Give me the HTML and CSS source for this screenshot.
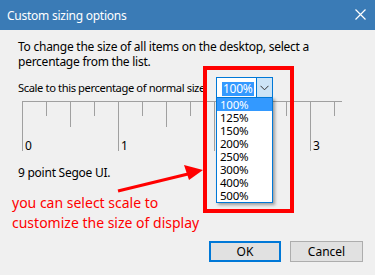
FILE: index.html
```html
<!DOCTYPE html>
<html>
<head>
<meta charset="utf-8">
<link rel="stylesheet" href="styles.css">
</head>
<body>
<div class="window">
  <div class="titlebar">
    <span class="title">Custom sizing options</span>
    <svg class="close" width="11" height="11" viewBox="0 0 11 11"><path d="M0.5 0.5 L10.5 10.5 M10.5 0.5 L0.5 10.5" stroke="#fff" stroke-width="1.2" fill="none"/></svg>
  </div>
  <div class="content">
    <p class="intro">To change the size of all items on the desktop, select a<br>percentage from the list.</p>
    <div class="scale-row">
      <span class="scale-label">Scale to this percentage of normal size</span>
      <div class="combo">
        <div class="combo-field"><span class="sel">100%</span></div>
        <div class="combo-btn"><svg width="9" height="6" viewBox="0 0 9 6"><path d="M0.5 0.8 L4.5 4.8 L8.5 0.8" stroke="#333" stroke-width="1" fill="none"/></svg></div>
      </div>
    </div>
    <svg class="ruler" width="321" height="54" viewBox="0 0 321 54">
      <g stroke="#a0a0a0" stroke-width="1">
        <path d="M0 0.5 H320"/>
        <path d="M0.5 0 V50"/>
        <path d="M24.5 0 V15 M48.5 0 V26 M72.5 0 V15 M96.5 0 V50 M120.5 0 V15 M144.5 0 V26 M168.5 0 V15 M192.5 0 V50 M216.5 0 V15 M240.5 0 V26 M264.5 0 V15 M288.5 0 V50 M312.5 0 V15"/>
      </g>
      <g class="rlabel">
        <text x="3" y="49">0</text>
        <text x="99" y="49">1</text>
        <text x="291" y="49">3</text>
      </g>
    </svg>
    <p class="font-note">9 point Segoe UI.</p>
    <p class="annotation">you can select scale to<br>customize the size of display</p>
    <div class="buttons">
      <button class="btn btn-default">OK</button>
      <button class="btn">Cancel</button>
    </div>
  </div>
  <ul class="dropdown">
    <li class="active">100%</li>
    <li>125%</li>
    <li>150%</li>
    <li>200%</li>
    <li>250%</li>
    <li>300%</li>
    <li>400%</li>
    <li>500%</li>
  </ul>
  <div class="highlight-box"></div>
  <svg class="arrow" width="100" height="40" viewBox="0 0 100 40">
    <path d="M8 31 L78 14" stroke="#ff0000" stroke-width="3" fill="none"/>
    <path d="M93 10 L74 5 L79 20 Z" fill="#ff0000"/>
  </svg>
</div>
</body>
</html>
```

FILE: styles.css
```css
* { box-sizing: border-box; }
html, body { margin: 0; padding: 0; }
body {
  background: #f0f0f0;
  font-family: "Noto Sans", "DejaVu Sans", sans-serif;
  font-size: 12px;
  letter-spacing: -0.25px;
  color: #000;
}
.window {
  position: relative;
  width: 375px;
  height: 275px;
  overflow: hidden;
  background: #f0f0f0;
}
.titlebar {
  height: 30px;
  background: #3a7bb6;
  display: flex;
  align-items: center;
  justify-content: space-between;
  padding: 0 9px 0 7px;
}
.title {
  color: #fff;
  font-size: 12px;
}
.close { display: block; margin-top: -2px; }
.content {
  padding: 9px 12px 0 18px;
}
.intro {
  margin: 0;
  line-height: 15px;
}
.scale-row {
  margin-top: 8px;
  display: grid;
  grid-template-columns: 198px 57px;
  align-items: center;
  height: 21px;
}
.scale-label {
  line-height: 15px;
  white-space: nowrap;
  font-size: 11.2px;
  letter-spacing: -0.4px;
}
.combo {
  display: flex;
  height: 21px;
  border: 1px solid #0078d7;
  background: #fff;
}
.combo-field {
  flex: 1;
  padding: 2px 0 0 5px;
}
.sel {
  display: inline-block;
  background: #3399ff;
  color: #fff;
  line-height: 14px;
  padding: 0 1px;
}
.combo-btn {
  width: 16px;
  background: #cce4f7;
  border-left: 1px solid #0078d7;
  display: flex;
  align-items: center;
  justify-content: center;
}
.ruler {
  display: block;
  margin: 3px 0 0 4px;
}
.rlabel text {
  font-family: "Noto Sans", "DejaVu Sans", sans-serif;
  font-size: 12px;
  fill: #000;
}
.font-note {
  margin: 10px 0 0;
  line-height: 15px;
}
.annotation {
  margin: 13px 0 0 -6px;
  color: #ff0000;
  font-size: 14px;
  line-height: 20px;
  letter-spacing: 0;
}
.buttons {
  display: flex;
  justify-content: flex-end;
  gap: 9px;
  margin-top: 8px;
}
.btn {
  width: 73px;
  height: 21px;
  background: #e1e1e1;
  border: 1px solid #adadad;
  font-family: "Noto Sans", "DejaVu Sans", sans-serif;
  font-size: 12px;
  color: #000;
  padding: 0;
}
.btn-default {
  width: 72px;
  border: 2px solid #0078d7;
}
.dropdown {
  position: absolute;
  left: 216px;
  top: 97px;
  width: 57px;
  height: 106px;
  margin: 0;
  padding: 0;
  list-style: none;
  background: #fff;
  border: 1px solid #0078d7;
  box-shadow: 2px 2px 3px rgba(0,0,0,0.35);
  font-size: 11.5px;
}
.dropdown li {
  height: 13px;
  line-height: 13px;
  padding-left: 3px;
}
.dropdown li.active {
  background: #3399ff;
  color: #fff;
}
.highlight-box {
  position: absolute;
  left: 203px;
  top: 66px;
  width: 91px;
  height: 147px;
  border: 4px solid #ff0000;
}
.arrow {
  position: absolute;
  left: 110px;
  top: 160px;
}
```
